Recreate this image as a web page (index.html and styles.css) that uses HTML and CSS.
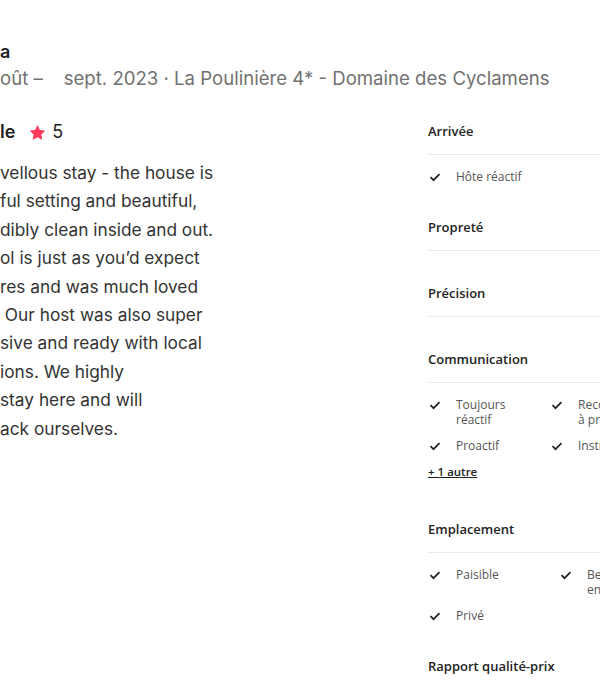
FILE: index.html
```html
<!DOCTYPE html>
<html>
<head>
  <meta charset="UTF-8">
  <title>Avis</title>
  <link rel="stylesheet" href="styles.css">
</head>
<body>

  <div class="review-head">
    <div class="guest-name">a</div>
    <div class="stay-info">oût –&nbsp;&nbsp;&nbsp; sept. 2023 · La Poulinière 4* - Domaine des Cyclamens</div>
  </div>

  <div class="review-body">
    <!-- Review text -->
    <div class="review-text">
      <div class="rating">
        <span>le</span>
        <svg class="star" viewBox="0 0 32 32"><path d="M15.094 1.579l-4.124 8.885-9.86 1.27a1 1 0 0 0-.542 1.736l7.293 6.565-1.965 9.852a1 1 0 0 0 1.483 1.061L16 25.951l8.625 4.997a1 1 0 0 0 1.482-1.06l-1.965-9.853 7.293-6.565a1 1 0 0 0-.541-1.735l-9.86-1.271-4.127-8.885a1 1 0 0 0-1.814 0z"/></svg>
        <span>5</span>
      </div>
      <p class="comment">
        vellous stay - the house is<br>
        ful setting and beautiful,<br>
        dibly clean inside and out.<br>
        ol is just as you’d expect<br>
        res and was much loved<br>
        &nbsp;Our host was also super<br>
        sive and ready with local<br>
        ions. We highly<br>
        stay here and will<br>
        ack ourselves.
      </p>
    </div>

    <!-- Category details -->
    <div class="categories">
      <div class="category">
        <h3>Arrivée</h3>
        <div class="tags">
          <div class="tag"><svg class="check" viewBox="0 0 32 32"><path d="M4 16.5l8 8 16-16"/></svg><span>Hôte réactif</span></div>
        </div>
      </div>

      <div class="category">
        <h3>Propreté</h3>
      </div>

      <div class="category">
        <h3>Précision</h3>
      </div>

      <div class="category">
        <h3>Communication</h3>
        <div class="tags two-col comm">
          <div class="tag"><svg class="check" viewBox="0 0 32 32"><path d="M4 16.5l8 8 16-16"/></svg><span>Toujours réactif</span></div>
          <div class="tag"><svg class="check" viewBox="0 0 32 32"><path d="M4 16.5l8 8 16-16"/></svg><span>Recommandations à proximité</span></div>
          <div class="tag"><svg class="check" viewBox="0 0 32 32"><path d="M4 16.5l8 8 16-16"/></svg><span>Proactif</span></div>
          <div class="tag"><svg class="check" viewBox="0 0 32 32"><path d="M4 16.5l8 8 16-16"/></svg><span>Instructions</span></div>
        </div>
        <a class="more" href="#">+ 1 autre</a>
      </div>

      <div class="category">
        <h3>Emplacement</h3>
        <div class="tags two-col place">
          <div class="tag"><svg class="check" viewBox="0 0 32 32"><path d="M4 16.5l8 8 16-16"/></svg><span>Paisible</span></div>
          <div class="tag"><svg class="check" viewBox="0 0 32 32"><path d="M4 16.5l8 8 16-16"/></svg><span>Bel environnement</span></div>
          <div class="tag"><svg class="check" viewBox="0 0 32 32"><path d="M4 16.5l8 8 16-16"/></svg><span>Privé</span></div>
        </div>
      </div>

      <div class="category">
        <h3>Rapport qualité-prix</h3>
      </div>
    </div>
  </div>

</body>
</html>
```

FILE: styles.css
```css
body {
  margin: 0;
  padding-top: 41px;
  background: #fff;
  color: #222;
  font-family: Inter, "Noto Sans", sans-serif;
  overflow: hidden;
  height: 700px;
}
.review-head {
  margin-bottom: 32px;
}
.guest-name {
  font-size: 18px;
  line-height: 22px;
  font-weight: 600;
}
.stay-info {
  margin-top: 4px;
  font-size: 18.6px;
  line-height: 22px;
  color: #717171;
  white-space: nowrap;
}
.review-body {
  display: flex;
  align-items: flex-start;
}
.review-text {
  width: 428px;
  flex: none;
}
.rating {
  display: flex;
  align-items: center;
  gap: 7px;
  font-size: 18px;
  line-height: 22px;
  font-weight: 600;
}
.rating span:last-child {
  font-weight: 400;
}
.star {
  width: 15px;
  height: 15px;
  fill: #ff385c;
  margin-left: 8px;
}
.comment {
  margin: 16px 0 0;
  font-size: 17.3px;
  line-height: 28.4px;
  color: #333;
  white-space: nowrap;
}
.categories {
  width: 320px;
  flex: none;
  font-family: "Open Sans", "Noto Sans", sans-serif;
}
.category {
  margin-bottom: 32px;
}
.category h3 {
  margin: 0;
  padding-bottom: 13px;
  border-bottom: 1px solid #ebebeb;
  font-size: 13px;
  line-height: 20px;
  font-weight: 600;
  color: #222;
}
.category:last-child h3 {
  border-bottom: none;
}
.tags {
  padding: 14px 0 1px;
  display: grid;
  row-gap: 11px;
}
.two-col.comm { grid-template-columns: 122px 1fr; }
.two-col.place { grid-template-columns: 131px 1fr; }
.tag {
  display: flex;
  align-items: flex-start;
  font-size: 12px;
  line-height: 15px;
  color: #555;
}
.tag span {
  max-width: 80px;
}
.check {
  width: 12px;
  height: 12px;
  margin: 2px 15px 0 1px;
  flex: none;
  fill: none;
  stroke: #222;
  stroke-width: 4.5;
}
.more {
  display: inline-block;
  margin-top: 10px;
  margin-bottom: 8px;
  font-size: 11.5px;
  line-height: 15px;
  font-weight: 600;
  color: #222;
}
```
